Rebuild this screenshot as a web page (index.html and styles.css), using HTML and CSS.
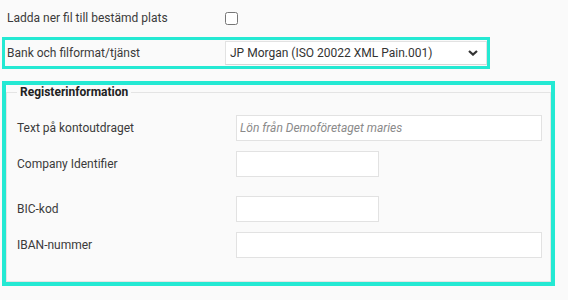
FILE: index.html
```html
<!DOCTYPE html>
<html lang="sv">
<head>
    <meta charset="UTF-8">
    <meta name="viewport" content="width=device-width, initial-scale=1.0">
    <title>Exportinställningar</title>
    <link rel="stylesheet" href="styles.css">
</head>
<body>

<div class="settings">
    <!-- Nedladdning -->
    <div class="row row-check">
        <label class="row-label" for="downloadPath">Ladda ner fil till bestämd plats</label>
        <input type="checkbox" id="downloadPath" class="check" />
    </div>

    <!-- Bank -->
    <div class="row row-bank highlight">
        <label class="row-label" for="bankFormat">Bank och filformat/tjänst</label>
        <div class="select-wrap">
            <select id="bankFormat" class="select">
                <option>JP Morgan (ISO 20022 XML Pain.001)</option>
            </select>
            <svg class="select-arrow" width="10" height="6" viewBox="0 0 10 6">
                <path d="M1 1 L5 4.6 L9 1" fill="none" stroke="#333" stroke-width="2.2" />
            </svg>
        </div>
    </div>

    <!-- Registerinformation -->
    <div class="register-box highlight">
        <fieldset class="register">
            <legend>Registerinformation</legend>

            <div class="field">
                <label class="field-label" for="statementText">Text på kontoutdraget</label>
                <input type="text" id="statementText" class="input input-wide" placeholder="Lön från Demoföretaget maries" />
            </div>
            <div class="field field-spaced">
                <label class="field-label" for="companyId">Company Identifier</label>
                <input type="text" id="companyId" class="input input-short" />
            </div>
            <div class="field">
                <label class="field-label" for="bic">BIC-kod</label>
                <input type="text" id="bic" class="input input-short" />
            </div>
            <div class="field">
                <label class="field-label" for="iban">IBAN-nummer</label>
                <input type="text" id="iban" class="input input-wide" />
            </div>
        </fieldset>
    </div>
</div>

</body>
</html>
```

FILE: styles.css
```css
body {
    background-color: #fafafa;
    color: #3a3a3a;
    font-family: Roboto, "Liberation Sans", Arial, sans-serif;
    font-size: 12px;
    margin: 0;
    padding: 0;
}
.settings {
    padding: 5px 0 14px 5px;
}
.highlight {
    outline: 3px solid #24e9d3;
}
.row {
    display: flex;
    align-items: center;
    width: 482px;
}
.row-label {
    width: 218px;
    padding-left: 2px;
}
.row-check {
    height: 26px;
    margin-bottom: 9px;
}
.check {
    margin: 0;
    width: 13px;
    height: 13px;
}
.row-bank {
    height: 26px;
    padding: 1px 0 1px;
    box-sizing: border-box;
    align-items: flex-start;
}
.row-bank .row-label {
    line-height: 24px;
}
.select-wrap {
    position: relative;
    width: 262px;
}
.select {
    appearance: none;
    -webkit-appearance: none;
    width: 100%;
    height: 24px;
    margin: 0;
    padding: 0 20px 0 4px;
    border: 1px solid #e2e2e2;
    border-bottom-color: #d6d6d6;
    border-radius: 0;
    background-color: #fff;
    color: #333;
    font-family: Roboto, "Liberation Sans", Arial, sans-serif;
    font-size: 12px;
}
.select-arrow {
    position: absolute;
    right: 9px;
    top: 9px;
    pointer-events: none;
}
.register-box {
    margin: 19px 0 0 1px;
    width: 545px;
    outline-width: 4px;
}
.register {
    margin: 0;
    box-sizing: border-box;
    padding: 0 8px 23px 10px;
    border: 1px solid #e4e4e4;
}
.register legend {
    padding: 0 3px;
    font-weight: bold;
    color: #222;
    line-height: 14px;
}
.field {
    display: flex;
    align-items: center;
    margin-top: 10px;
}
.field:first-of-type {
    margin-top: 16px;
}
.field-spaced {
    margin-bottom: 19px;
}
.field-label {
    width: 219px;
    flex-shrink: 0;
}
.input {
    height: 26px;
    box-sizing: border-box;
    margin: 0;
    padding: 0 4px 0 3px;
    border: 1px solid #e2e2e2;
    background-color: #fff;
    color: #333;
    font-family: Roboto, "Liberation Sans", Arial, sans-serif;
    font-size: 12px;
}
.input::placeholder {
    color: #8a8a8a;
    font-style: italic;
}
.input-wide {
    width: 306px;
}
.input-short {
    width: 143px;
}
```
